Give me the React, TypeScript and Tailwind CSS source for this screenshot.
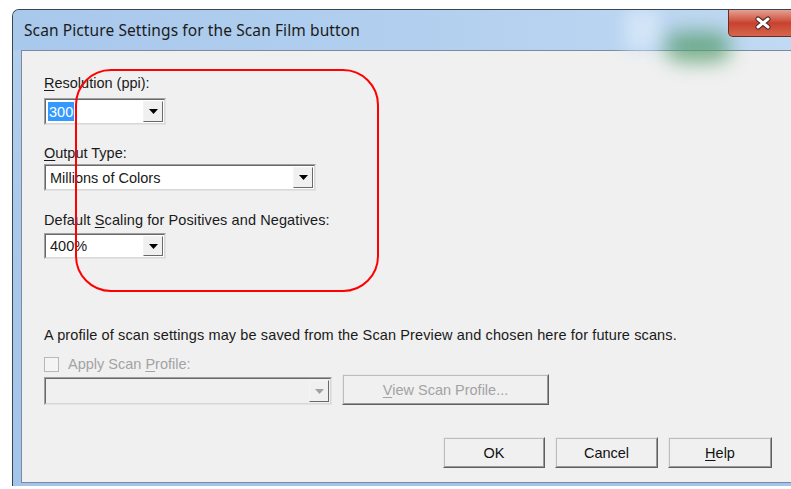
import React from 'react';

const ui = "font-['Liberation_Sans',Arial,sans-serif] text-[14.5px] leading-[16px]";

// Sunken combo box frame with a raised drop-down button on the right
const ComboBox: React.FC<{
  width: string;
  height?: string;
  disabled?: boolean;
  children?: React.ReactNode;
}> = ({ width, height = 'h-[27px]', disabled, children }) => (
  <div className={`${width} ${height} border border-t-[#a0a0a0] border-l-[#a0a0a0] border-b-[#e3e3e3] border-r-[#e3e3e3]`}>
    <div
      className={`h-full flex border border-t-[#696969] border-l-[#696969] border-b-[#d8d8d8] border-r-[#d8d8d8] ${
        disabled ? 'bg-[#f0f0f0]' : 'bg-white'
      }`}
    >
      <div className="flex-1 flex items-center pl-[2px] overflow-hidden">{children}</div>
      <div className="w-[20px] m-[1px] border border-t-[#f4f4f4] border-l-[#f4f4f4] border-b-[#696969] border-r-[#696969] bg-[#f0f0f0] flex items-center justify-center">
        <svg width="9" height="5" viewBox="0 0 9 5">
          <path d="M0 0 H9 L4.5 5 Z" fill={disabled ? '#a0a0a0' : '#000'} />
        </svg>
      </div>
    </div>
  </div>
);

// Classic raised push button
const PushButton: React.FC<{ width: string; disabled?: boolean; children: React.ReactNode }> = ({
  width,
  disabled,
  children,
}) => (
  <div className={`${width} h-[31px] border border-t-[#e8e8e8] border-l-[#e8e8e8] border-b-[#5f5f5f] border-r-[#5f5f5f]`}>
    <div className="h-full border border-t-[#bdbdbd] border-l-[#bdbdbd] border-b-[#9a9a9a] border-r-[#9a9a9a] bg-[#f0f0f0] flex items-center justify-center">
      <span className={disabled ? 'text-[#a3a3a3]' : 'text-[#111]'}>{children}</span>
    </div>
  </div>
);

const U: React.FC<{ children: React.ReactNode }> = ({ children }) => (
  <span className="underline underline-offset-[2px]">{children}</span>
);

export default function App() {
  return (
    <div className="w-[791px] h-[489px] bg-white overflow-hidden relative">
      {/* window frame */}
      <div className="ml-[12px] mt-[9px] w-[800px] h-[477px] rounded-tl-[7px] border-t border-l border-[#3c4450] bg-gradient-to-b from-[#b4d0ee] via-[#a9c8ea] to-[#a3c5ea] flex flex-col relative overflow-hidden">
        {/* title bar */}
        <div className="h-[40px] relative flex items-center pl-[11px] pt-[1px] bg-gradient-to-r from-[#a8c8ec] via-[#b2cfef] to-[#c2daf3]">
          <div className="absolute left-[612px] top-0 w-[36px] h-[40px] bg-[#d2e5f7] blur-[8px]" />
          <div className="absolute left-[652px] top-[22px] w-[66px] h-[30px] rounded-full bg-[#5a9f72] blur-[10px] opacity-80" />
          <span className="relative font-['Noto_Sans',sans-serif] text-[15.5px] tracking-[0.1px] text-[#1b1b1b]">
            Scan Picture Settings for the Scan Film button
          </span>
        </div>

        {/* close button */}
        <div className="absolute left-[715px] top-0 w-[80px] h-[27px] rounded-bl-[5px] border border-t-0 border-[#6b2a22] bg-gradient-to-b from-[#e4a092] via-[#c8412f] to-[#d5664c] flex items-center justify-center">
          <svg width="18" height="14" viewBox="0 0 18 14" className="mr-[10px]">
            <path d="M4 3 L14 11 M14 3 L4 11" stroke="#4a2520" strokeWidth="5" strokeLinecap="round" />
            <path d="M4 3 L14 11 M14 3 L4 11" stroke="#fff" strokeWidth="3" strokeLinecap="round" />
          </svg>
        </div>

        {/* client area */}
        <div className={`ml-[8px] h-[433px] border border-[#7b8a9e] bg-[#f0f0f0] ${ui} text-[#1a1a1a]`}>
          <div className="pl-[22px] flex flex-col items-start">
            <div className="mt-[24px]">
              <U>R</U>esolution (ppi):
            </div>
            <div className="mt-[7px]">
              <ComboBox width="w-[122px]">
                <span className="bg-[#3399ff] text-white px-[1px] h-[19px] flex items-center">300</span>
              </ComboBox>
            </div>

            <div className="mt-[20px]">
              <U>O</U>utput Type:
            </div>
            <div className="mt-[3px]">
              <ComboBox width="w-[272px]">
                <span className="pl-[2px]">Millions of Colors</span>
              </ComboBox>
            </div>

            <div className="mt-[21px] tracking-[0.1px]">
              Default <U>S</U>caling for Positives and Negatives:
            </div>
            <div className="mt-[5px]">
              <ComboBox width="w-[122px]" height="h-[26px]">
                <span className="pl-[2px]">400%</span>
              </ComboBox>
            </div>

            <div className="mt-[68px] tracking-[0.12px]">
              A profile of scan settings may be saved from the Scan Preview and chosen here for future scans.
            </div>

            <div className="mt-[13px] flex items-center gap-[9px] text-[#a3a3a3]">
              <div className="w-[15px] h-[15px] border border-[#b8b8b8] bg-[#f4f4f4]" />
              <span>
                Apply Scan <U>P</U>rofile:
              </span>
            </div>

            <div className="mt-[2px] flex items-end gap-[10px]">
              <ComboBox width="w-[288px]" height="h-[28px]" disabled />
              <PushButton width="w-[207px]" disabled>
                <U>V</U>iew Scan Profile...
              </PushButton>
            </div>

            <div className="mt-[32px] ml-[399px] flex gap-[10px]">
              <PushButton width="w-[102px]">OK</PushButton>
              <PushButton width="w-[103px]">Cancel</PushButton>
              <PushButton width="w-[104px]">
                <U>H</U>elp
              </PushButton>
            </div>
          </div>
        </div>
      </div>

      {/* red annotation outline */}
      <div className="absolute left-[75px] top-[69px] w-[304px] h-[223px] rounded-[36px] border-2 border-[#ff0000] pointer-events-none" />
    </div>
  );
}
